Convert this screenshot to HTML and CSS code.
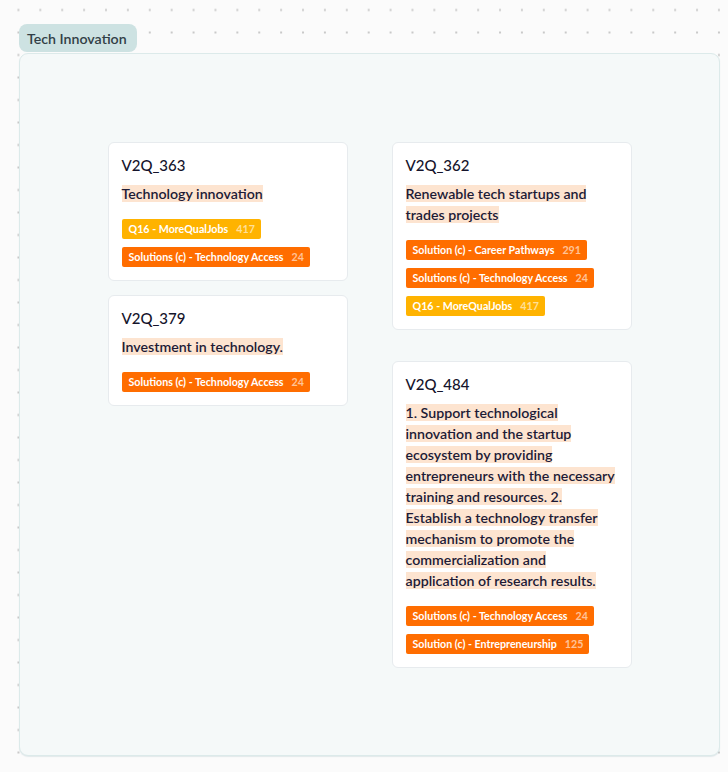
FILE: index.html
```html
<!DOCTYPE html>
<html lang="en">
<head>
<meta charset="utf-8">
<title>Tech Innovation</title>
<link rel="stylesheet" href="styles.css">
</head>
<body>
<div class="canvas">
  <div class="group">
    <div class="group-label">Tech Innovation</div>
    <div class="group-body">
      <div class="board">
        <div class="col">
          <div class="card">
            <div class="card-title">V2Q_363</div>
            <p class="card-desc"><span class="hl">Technology innovation</span></p>
            <div class="tags">
              <span class="tag tag-yellow">Q16 - MoreQualJobs<span class="count">417</span></span>
              <span class="tag tag-orange">Solutions (c) - Technology Access<span class="count">24</span></span>
            </div>
          </div>
          <div class="card">
            <div class="card-title">V2Q_379</div>
            <p class="card-desc"><span class="hl">Investment in technology.</span></p>
            <div class="tags">
              <span class="tag tag-orange">Solutions (c) - Technology Access<span class="count">24</span></span>
            </div>
          </div>
        </div>
        <div class="col col-wide-gap">
          <div class="card">
            <div class="card-title">V2Q_362</div>
            <p class="card-desc"><span class="hl">Renewable tech startups and trades projects</span></p>
            <div class="tags">
              <span class="tag tag-orange">Solution (c) - Career Pathways<span class="count">291</span></span>
              <span class="tag tag-orange">Solutions (c) - Technology Access<span class="count">24</span></span>
              <span class="tag tag-yellow">Q16 - MoreQualJobs<span class="count">417</span></span>
            </div>
          </div>
          <div class="card">
            <div class="card-title">V2Q_484</div>
            <p class="card-desc"><span class="hl">1. Support technological innovation and the startup ecosystem by providing entrepreneurs with the necessary training and resources. 2. Establish a technology transfer mechanism to promote the commercialization and application of research results.</span></p>
            <div class="tags">
              <span class="tag tag-orange">Solutions (c) - Technology Access<span class="count">24</span></span>
              <span class="tag tag-orange">Solution (c) - Entrepreneurship<span class="count">125</span></span>
            </div>
          </div>
        </div>
      </div>
    </div>
  </div>
</div>
</body>
</html>
```

FILE: styles.css
```css
* { box-sizing: border-box; }

html, body {
  margin: 0;
  padding: 0;
}

body {
  width: 728px;
  height: 772px;
  overflow: hidden;
  background-color: #fbfbfb;
  background-image: radial-gradient(circle, #c9c9c9 0.9px, transparent 1.3px);
  background-size: 21.9px 22.5px;
  background-position: 7.5px -1.25px;
  font-family: "Lato", "Noto Sans", sans-serif;
  color: #1b1a33;
}

.canvas {
  padding: 24px 0 0 19px;
}

.group {
  width: 701px;
}

.group-label {
  display: inline-flex;
  align-items: center;
  height: 28px;
  padding: 0 10px 0 8px;
  margin-bottom: 1px;
  background: #cde2e2;
  border-radius: 8px;
  font-size: 14.2px;
  font-weight: 600;
  color: #323f47;
}

.group-body {
  height: 703px;
  background: #f5f9f9;
  border: 1.5px solid #dceaea;
  border-radius: 9px;
  box-shadow: 0 1px 1px rgba(180, 200, 205, 0.35);
  display: flex;
  align-items: center;
  justify-content: center;
}

.board {
  display: flex;
  align-items: flex-start;
  gap: 44px;
}

.col {
  display: flex;
  flex-direction: column;
  gap: 14px;
  width: 240px;
}

.col-wide-gap {
  gap: 31px;
}

.card {
  background: #ffffff;
  border: 1px solid #e7ebee;
  border-radius: 6px;
  padding: 12px 15px 13px 13px;
}

.card-title {
  font-size: 15px;
  line-height: 20px;
  font-weight: 500;
  color: #15142b;
}

.card-desc {
  margin: 8px 0 0;
  font-size: 14.2px;
  line-height: 21px;
  font-weight: 600;
  color: #1d1b36;
}

.hl {
  background: #fde4d0;
}

.tags {
  margin-top: 15px;
  display: flex;
  flex-direction: column;
  align-items: flex-start;
  gap: 8px;
}

.tag {
  display: inline-flex;
  align-items: center;
  height: 20px;
  padding: 0 6px 0 7px;
  border-radius: 2px;
  font-size: 10.7px;
  font-weight: 700;
  color: #ffffff;
  white-space: nowrap;
}

.tag-orange { background: #ff6d00; }
.tag-yellow { background: #ffb300; }

.count {
  margin-left: 8px;
  color: rgba(255, 255, 255, 0.6);
}
```
